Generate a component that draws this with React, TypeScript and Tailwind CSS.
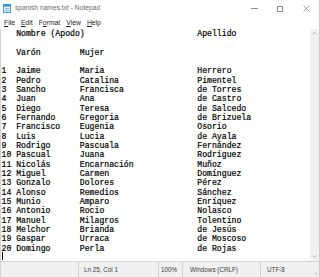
import React from 'react';

const rows: [string, string, string][] = [
  ['Jaime', 'Maria', 'Herrero'],
  ['Pedro', 'Catalina', 'Pimentel'],
  ['Sancho', 'Francisca', 'de Torres'],
  ['Juan', 'Ana', 'de Castro'],
  ['Diego', 'Teresa', 'de Salcedo'],
  ['Fernando', 'Gregoria', 'de Brizuela'],
  ['Francisco', 'Eugenia', 'Osorio'],
  ['Luis', 'Lucia', 'de Ayala'],
  ['Rodrigo', 'Pascuala', 'Fernández'],
  ['Pascual', 'Juana', 'Rodríguez'],
  ['Nicolás', 'Encarnación', 'Muñoz'],
  ['Miguel', 'Carmen', 'Domínguez'],
  ['Gonzalo', 'Dolores', 'Pérez'],
  ['Alonso', 'Remedios', 'Sánchez'],
  ['Munio', 'Amparo', 'Enríquez'],
  ['Antonio', 'Rocio', 'Nolasco'],
  ['Manuel', 'Milagros', 'Tolentino'],
  ['Melchor', 'Brianda', 'de Jesús'],
  ['Gaspar', 'Urraca', 'de Moscoso'],
  ['Domingo', 'Perla', 'de Rojas'],
];

const lines = [
  '   Nombre (Apodo)'.padEnd(40) + 'Apellido',
  '',
  '   Varón'.padEnd(16) + 'Mujer',
  '',
  ...rows.map(([m, f, s], i) => String(i + 1).padEnd(3) + m.padEnd(13) + f.padEnd(24) + s),
  '',
  '',
  '',
];

const NotepadIcon = () => (
  <svg width="8" height="9" viewBox="0 0 8 9" className="shrink-0">
    <rect x="0.5" y="0.5" width="7" height="8" fill="#dff1fb" stroke="#4a9fd4" />
    <rect x="0.5" y="0.5" width="7" height="2" fill="#3c8fcf" />
    <line x1="2" y1="4.5" x2="6" y2="4.5" stroke="#7bb9e0" />
    <line x1="2" y1="6.5" x2="6" y2="6.5" stroke="#7bb9e0" />
  </svg>
);

const MenuItem = ({ k, rest }: { k: string; rest: string }) => (
  <span>
    <span className="underline underline-offset-1">{k}</span>
    {rest}
  </span>
);

export default function App() {
  return (
    <div className="w-[320px] h-[277px] flex flex-col bg-white border-r border-[#c9c9c9] overflow-hidden font-['Liberation_Sans',sans-serif]">
      {/* title bar */}
      <div className="h-[17px] flex items-center pl-[3px] shrink-0">
        <NotepadIcon />
        <span className="ml-[4px] text-[6.7px] text-[#6b6b6b] leading-none">spanish names.txt - Notepad</span>
        <div className="flex-1" />
        <div className="flex items-center text-[#8a8a8a]">
          <div className="w-[26px] flex justify-center">
            <div className="w-[7px] h-px bg-[#8a8a8a]" />
          </div>
          <div className="w-[26px] flex justify-center">
            <div className="w-[6px] h-[6px] border border-[#8a8a8a]" />
          </div>
          <div className="w-[26px] flex justify-center">
            <svg width="7" height="7" viewBox="0 0 7 7">
              <path d="M0.5 0.5 L6.5 6.5 M6.5 0.5 L0.5 6.5" stroke="#8a8a8a" strokeWidth="0.8" />
            </svg>
          </div>
        </div>
      </div>

      {/* menu bar */}
      <div className="h-[12px] flex items-center gap-[6px] pl-[4px] text-[6.8px] text-[#1e1e1e] leading-none shrink-0">
        <MenuItem k="F" rest="ile" />
        <MenuItem k="E" rest="dit" />
        <span>F<span className="underline underline-offset-1">o</span>rmat</span>
        <MenuItem k="V" rest="iew" />
        <MenuItem k="H" rest="elp" />
      </div>

      {/* editor */}
      <div className="flex-1 flex min-h-0 border-l border-[#d4d4d4]">
        <div className="flex-1 relative overflow-hidden">
          <pre className="m-0 pl-[0.5px] font-['Liberation_Mono','Courier_New',monospace] text-[8.16px] leading-[9.33px] text-black [-webkit-text-stroke:0.2px_#000]">
            {lines.join('\n')}
          </pre>
          <div className="absolute left-[1px] top-[223px] w-px h-[8px] bg-black" />
        </div>
        <div className="w-[9px] bg-[#f0f0f0] flex flex-col items-center justify-between py-[3px]">
          <svg width="5" height="3" viewBox="0 0 5 3">
            <path d="M0.5 2.5 L2.5 0.5 L4.5 2.5" fill="none" stroke="#a6a6a6" strokeWidth="0.8" />
          </svg>
          <svg width="5" height="3" viewBox="0 0 5 3">
            <path d="M0.5 0.5 L2.5 2.5 L4.5 0.5" fill="none" stroke="#a6a6a6" strokeWidth="0.8" />
          </svg>
        </div>
      </div>

      {/* status bar */}
      <div className="h-[16px] flex items-stretch bg-[#f0f0f0] border-t border-[#d7d7d7] border-l border-l-[#d4d4d4] text-[6.3px] text-[#3c3c3c] shrink-0 relative">
        <div className="flex-1" />
        <div className="w-[80px] border-l border-[#d4d4d4] flex items-center pl-[5px]">Ln 25, Col 1</div>
        <div className="w-[24px] border-l border-[#d4d4d4] flex items-center pl-[2px]">100%</div>
        <div className="w-[78px] border-l border-[#d4d4d4] flex items-center pl-[7px]">Windows (CRLF)</div>
        <div className="w-[59px] border-l border-[#d4d4d4] flex items-center pl-[6px]">UTF-8</div>
        <svg width="5" height="5" viewBox="0 0 5 5" className="absolute right-[1px] bottom-[1px]">
          <circle cx="4" cy="1" r="0.5" fill="#b8b8b8" />
          <circle cx="2.5" cy="2.5" r="0.5" fill="#b8b8b8" />
          <circle cx="4" cy="2.5" r="0.5" fill="#b8b8b8" />
          <circle cx="1" cy="4" r="0.5" fill="#b8b8b8" />
          <circle cx="2.5" cy="4" r="0.5" fill="#b8b8b8" />
          <circle cx="4" cy="4" r="0.5" fill="#b8b8b8" />
        </svg>
      </div>
    </div>
  );
}
